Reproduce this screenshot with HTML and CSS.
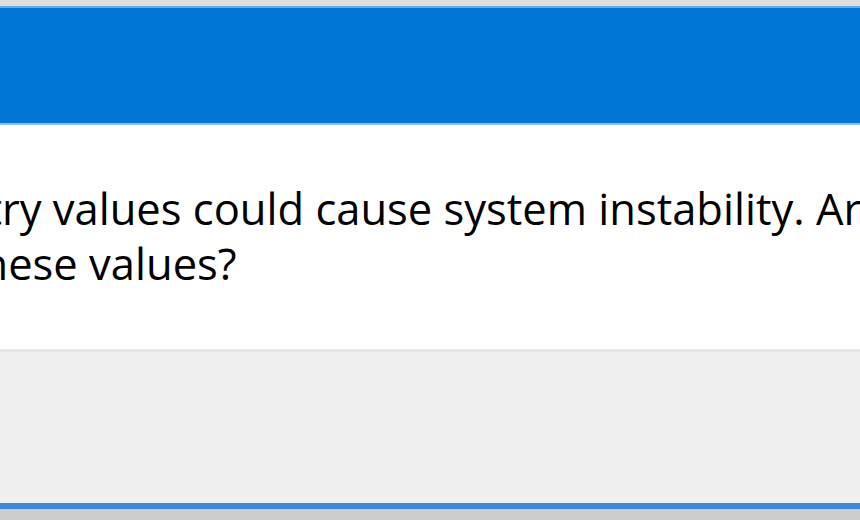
FILE: index.html
```html
<!DOCTYPE html>
<html lang="en">
<head>
  <meta charset="UTF-8">
  <title>Registry Editor</title>
  <link rel="stylesheet" href="styles.css">
</head>
<body>

  <div class="desktop"></div>

  <!-- Janela de confirmação -->
  <div class="janela">
    <div class="barra-titulo"></div>

    <div class="conteudo">
      <p class="mensagem">Modifying registry values could cause system instability. Are you sure you want to change<br>these values?</p>
    </div>

    <div class="rodape"></div>
  </div>

  <div class="desktop-baixo"></div>

</body>
</html>
```

FILE: styles.css
```css
body {
  margin: 0;
  background-color: #cdcdcd;
  font-family: "Open Sans", "Noto Sans", sans-serif;
  overflow: hidden;
}

/* Faixa cinza acima da janela */
.desktop {
  height: 6px;
  background-color: #dedede;
}

.janela {
  border-top: 2px solid #6aaae6;
  border-bottom: 6px solid #3f8ad6;
  background-color: #f0f0f0;
}

/* Barra de título azul */
.barra-titulo {
  height: 115px;
  background-color: #0076d6;
  border-bottom: 2px solid #8fc1ee;
}

/* Área branca com o texto */
.conteudo {
  height: 224px;
  background-color: #ffffff;
  overflow: hidden;
}

.mensagem {
  margin: 0;
  padding-top: 56px;
  margin-left: -34px;
  text-indent: -289px;
  font-size: 43.5px;
  font-weight: 500;
  line-height: 55px;
  color: #000;
  white-space: nowrap;
}

/* Rodapé cinza */
.rodape {
  height: 151px;
  border-top: 3px solid #e6e6e6;
}

.desktop-baixo {
  height: 20px;
  background-color: #cdcdcd;
}
```
